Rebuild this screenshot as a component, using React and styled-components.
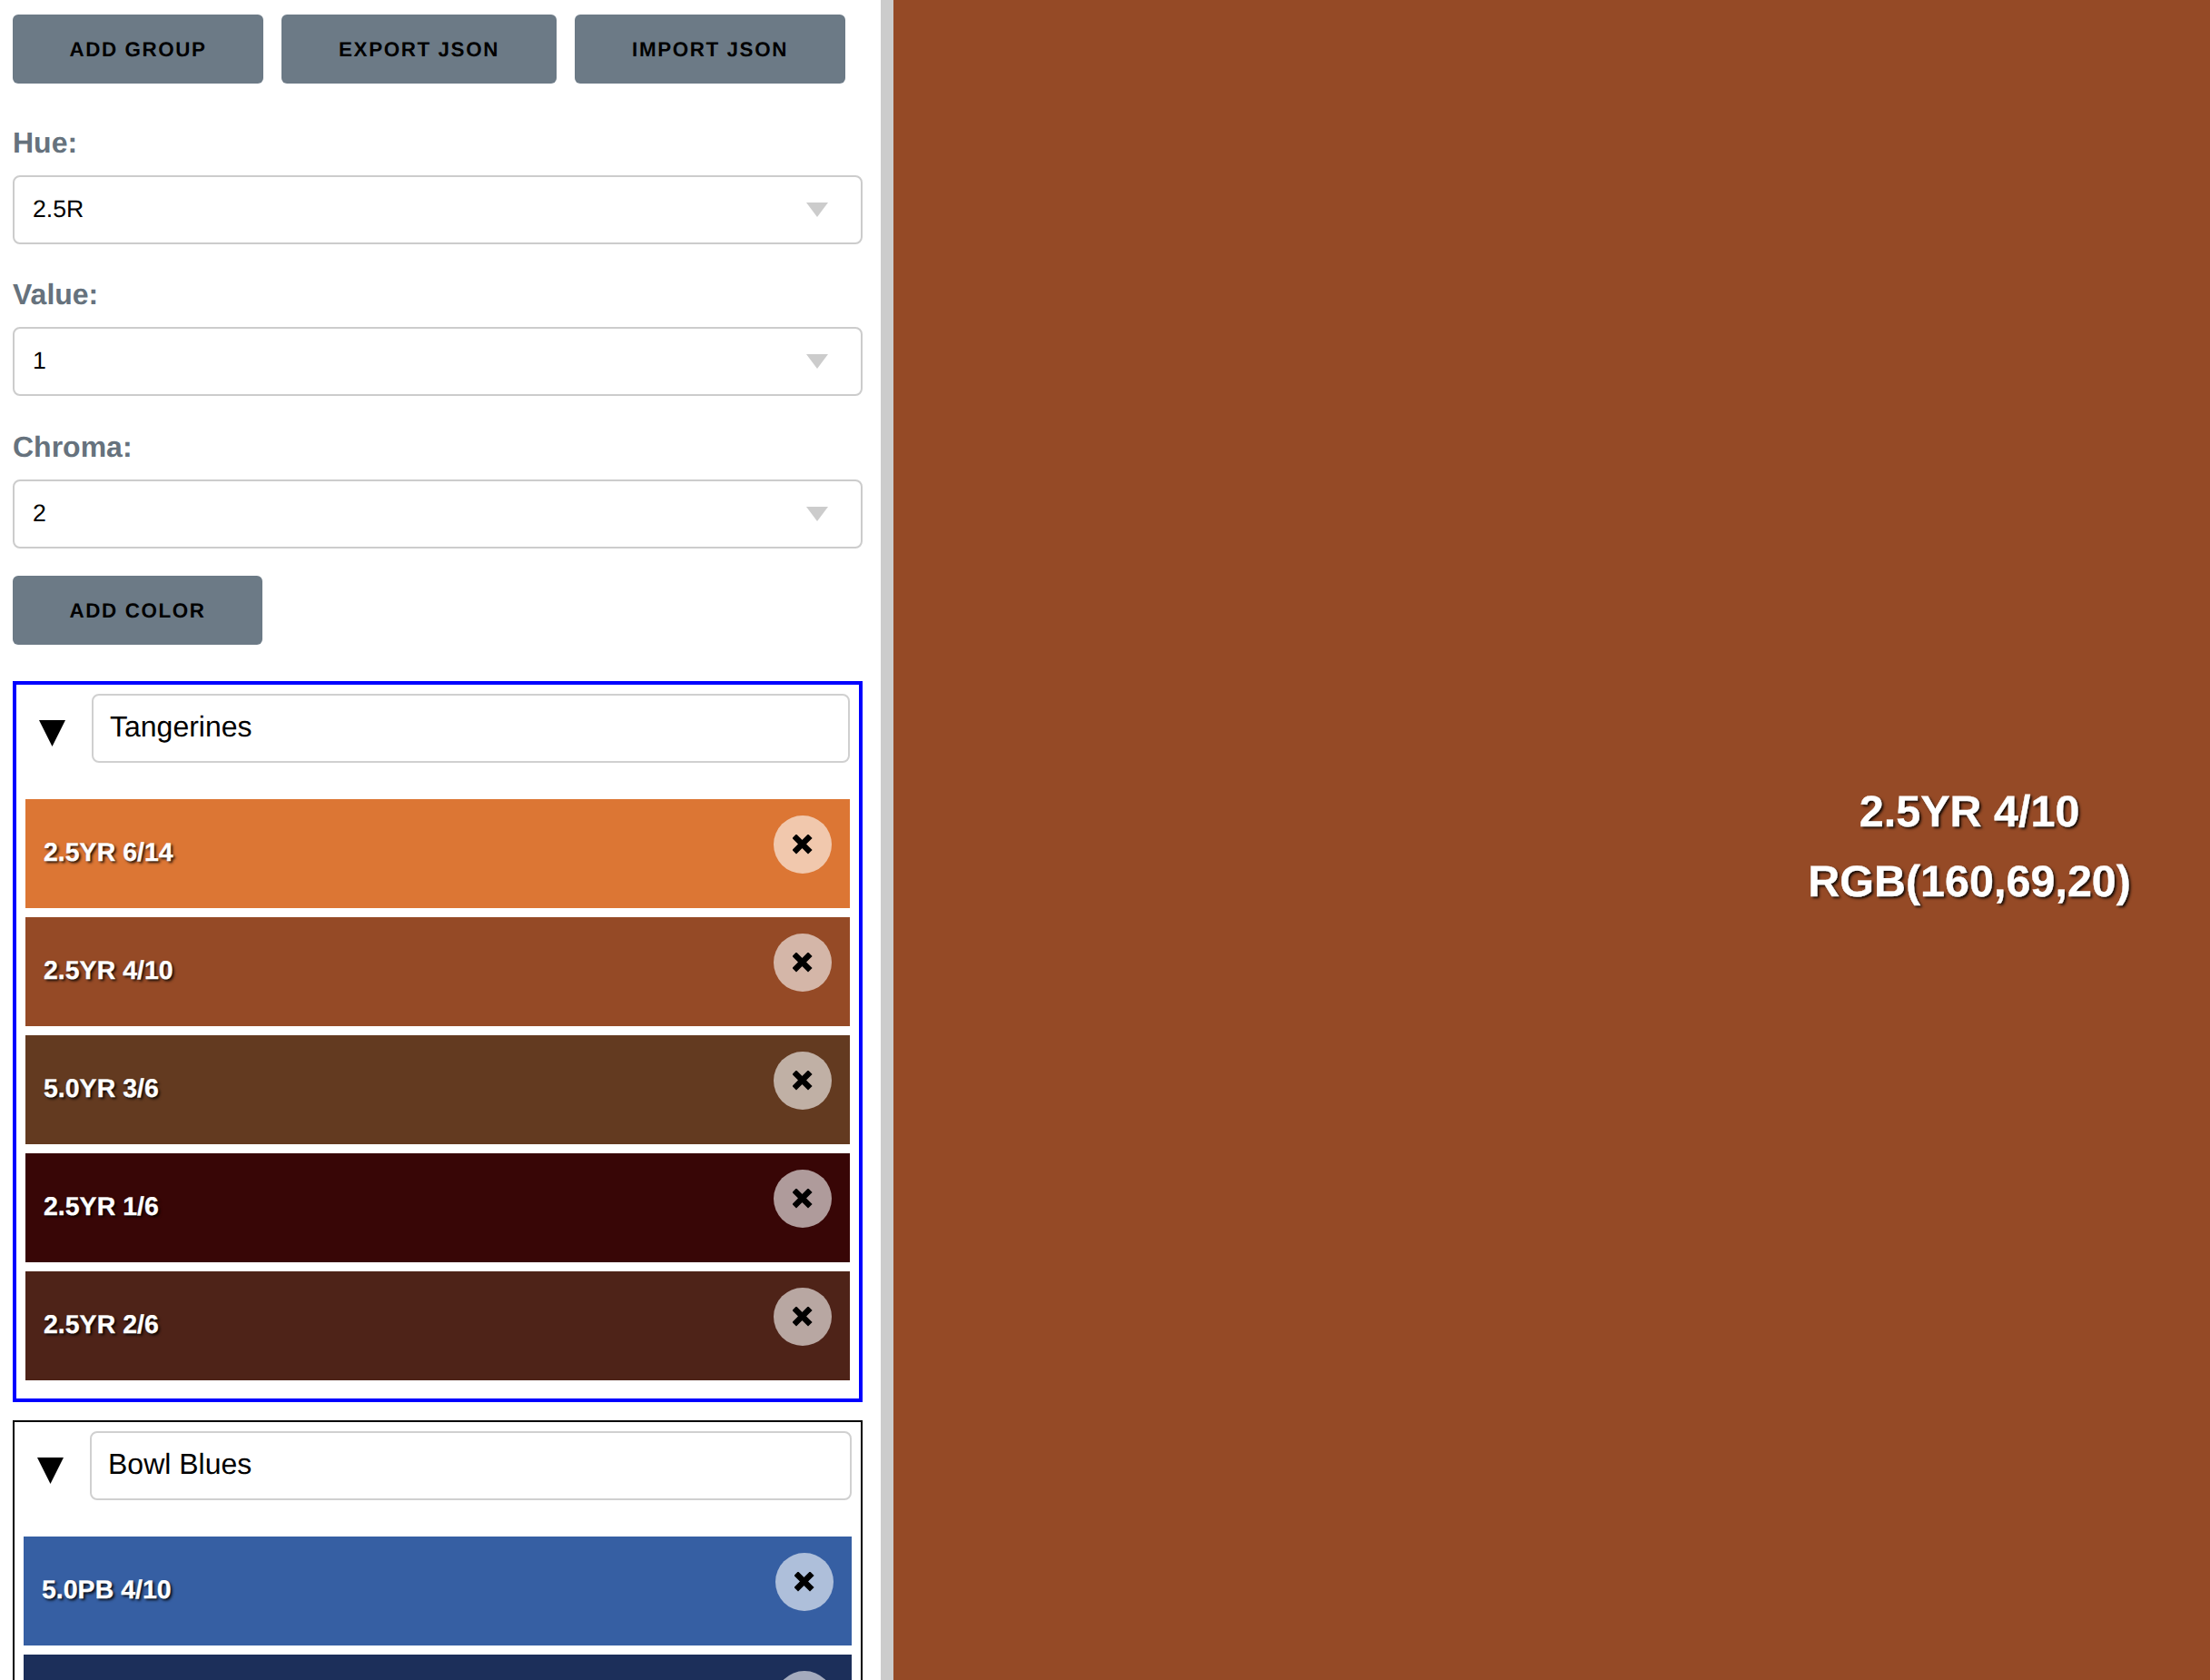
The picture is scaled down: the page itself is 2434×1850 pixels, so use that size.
import React from "react";
import styled, { createGlobalStyle } from "styled-components";

const Global = createGlobalStyle`
  html, body { margin: 0; padding: 0; height: 100%; background: #fff; overflow: hidden; }
  * { box-sizing: border-box; }
  body {
    font-family: "Liberation Sans", Arial, sans-serif;
    color: #000;
    text-rendering: geometricPrecision;
  }
  button, input, select { text-rendering: geometricPrecision; }
`;

const Page = styled.div`
  display: flex;
  height: 1850px;
  overflow: hidden;
`;

const Sidebar = styled.aside`
  width: 970px;
  flex: none;
  height: 100%;
  overflow: hidden;
  padding: 16px 20px 0 14px;
`;

const Divider = styled.div`
  width: 14px;
  flex: none;
  background: #cccccc;
`;

const Preview = styled.main`
  flex: 1;
  background: ${(p) => p.$color};
  display: flex;
  align-items: center;
  justify-content: flex-end;
  padding: 16px 87px 0 0;
`;

const PreviewText = styled.div`
  font-size: 48.5px;
  font-weight: 700;
  line-height: 77px;
  color: #fff;
  text-align: center;
  -webkit-text-stroke: 0.4px #fff;
  text-shadow: 2px 2px 3px rgba(0, 0, 0, 0.9);
`;

const Toolbar = styled.div`
  display: flex;
  gap: 20px;
  margin-bottom: 47px;
`;

const Button = styled.button`
  height: 76px;
  width: ${(p) => p.$width}px;
  flex: none;
  padding: 2px 0 0;
  border: 0;
  border-radius: 6px;
  background: #6c7a86;
  color: #000;
  font-family: inherit;
  font-size: 22.4px;
  font-weight: 700;
  letter-spacing: 1.6px;
  text-transform: uppercase;
`;

const Field = styled.div`
  margin-bottom: ${(p) => p.$gap}px;
`;

const Label = styled.label`
  display: block;
  font-size: 32px;
  font-weight: 700;
  color: #66727d;
  margin-bottom: 17px;
`;

const SelectWrap = styled.div`
  position: relative;
  width: 936px;
`;

const Select = styled.select`
  appearance: none;
  display: block;
  width: 100%;
  height: 76px;
  padding: 0 20px 2px;
  border: 2px solid #cccccc;
  border-radius: 8px;
  background: #fff;
  color: #000;
  font-family: inherit;
  font-size: 26.67px;
`;

const Caret = styled.span`
  position: absolute;
  top: 30px;
  right: 38px;
  width: 0;
  height: 0;
  border-left: 12px solid transparent;
  border-right: 12px solid transparent;
  border-top: 16px solid #cccccc;
  pointer-events: none;
`;

const AddColor = styled(Button)`
  display: block;
  margin-bottom: 40px;
`;

const Group = styled.section`
  width: 936px;
  margin-bottom: 20px;
  padding: 10px;
  border: ${(p) => (p.$active ? "4px solid #0000ff" : "2px solid #000000")};
`;

const GroupHeader = styled.div`
  display: flex;
  align-items: flex-start;
  margin-bottom: 40px;
`;

const Toggle = styled.div`
  width: 73px;
  flex: none;
  padding: 29px 0 0 15px;
  line-height: 0;
`;

const NameInput = styled.input`
  flex: 1;
  min-width: 0;
  height: 76px;
  padding: 0 18px 4px;
  border: 2px solid #d0d0d0;
  border-radius: 8px;
  background: #fff;
  color: #000;
  font-family: inherit;
  font-size: 32px;
  outline: none;
`;

const ColorRow = styled.div`
  position: relative;
  height: 120px;
  margin-bottom: 10px;
  padding: 43px 20px 0;
  background: ${(p) => p.$color};
  font-size: 28.5px;
  font-weight: 700;
  line-height: 32px;
  color: #fff;
  -webkit-text-stroke: 0.3px #fff;
  text-shadow: 2px 2px 3px rgba(0, 0, 0, 0.9);
`;

const Remove = styled.button`
  position: absolute;
  top: 18px;
  right: 20px;
  width: 64px;
  height: 64px;
  padding: 0;
  border: 0;
  border-radius: 50%;
  background: rgba(255, 255, 255, 0.6);
  display: flex;
  align-items: center;
  justify-content: center;
`;

const Triangle = () => (
  <svg width="29" height="29" viewBox="0 0 29 29" aria-hidden="true">
    <polygon points="0,0 29,0 14.5,29" fill="#000" />
  </svg>
);

const Cross = () => (
  <svg width="22" height="22" viewBox="0 0 22 22" aria-hidden="true">
    <path d="M4 4 L17 17 M17 4 L4 17" stroke="#000" strokeWidth="6.5" strokeLinecap="square" fill="none" />
  </svg>
);

const groups = [
  {
    name: "Tangerines",
    active: true,
    colors: [
      ["2.5YR 6/14", "#dc7634"],
      ["2.5YR 4/10", "#954a26"],
      ["5.0YR 3/6", "#633a20"],
      ["2.5YR 1/6", "#380606"],
      ["2.5YR 2/6", "#4e2318"],
    ],
  },
  {
    name: "Bowl Blues",
    active: false,
    colors: [
      ["5.0PB 4/10", "#365fa3"],
      ["", "#1c2f5a"],
    ],
  },
];

const fields = [
  ["Hue:", "2.5R", 37],
  ["Value:", "1", 38],
  ["Chroma:", "2", 30],
];

export default function App() {
  return (
    <Page>
      <Global />
      <Sidebar>
        <Toolbar>
          <Button $width={276}>Add Group</Button>
          <Button $width={303}>Export JSON</Button>
          <Button $width={298}>Import JSON</Button>
        </Toolbar>
        {fields.map(([label, value, gap]) => (
          <Field key={label} $gap={gap}>
            <Label>{label}</Label>
            <SelectWrap>
              <Select defaultValue={value}>
                <option value={value}>{value}</option>
              </Select>
              <Caret />
            </SelectWrap>
          </Field>
        ))}
        <AddColor $width={275}>Add Color</AddColor>
        {groups.map((g) => (
          <Group key={g.name} $active={g.active}>
            <GroupHeader>
              <Toggle>
                <Triangle />
              </Toggle>
              <NameInput defaultValue={g.name} />
            </GroupHeader>
            {g.colors.map(([label, color]) => (
              <ColorRow key={color} $color={color}>
                {label}
                <Remove aria-label={`Remove ${label}`}>
                  <Cross />
                </Remove>
              </ColorRow>
            ))}
          </Group>
        ))}
      </Sidebar>
      <Divider />
      <Preview $color="#954a26">
        <PreviewText>
          2.5YR 4/10
          <br />
          RGB(160,69,20)
        </PreviewText>
      </Preview>
    </Page>
  );
}
